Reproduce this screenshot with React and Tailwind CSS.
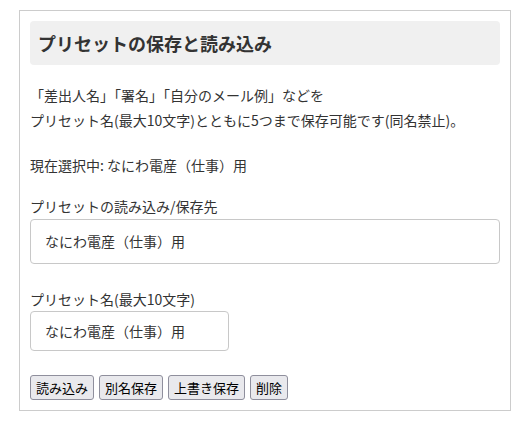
export default function App() {
  const font = { fontFamily: '"Noto Sans CJK JP", "Liberation Sans", sans-serif' };
  const buttons = ["読み込み", "別名保存", "上書き保存", "削除"];

  return (
    <div className="w-[530px] h-[434px] bg-white pt-[10px] pl-[19px]" style={font}>
      <div className="w-[492px] border border-[#cccccc] px-[10px] pt-[10px] pb-[10px] text-[#333333]">
        <h2 className="h-[44px] rounded-[4px] bg-[#f0f0f0] pl-[8px] flex items-center text-[18px] font-bold text-[#333333]">
          プリセットの保存と読み込み
        </h2>

        <p className="mt-[18px] text-[14px] leading-[25px]">
          「差出人名」「署名」「自分のメール例」などを
          <br />
          プリセット名(最大10文字)とともに5つまで保存可能です(同名禁止)。
        </p>

        <p className="mt-[20px] text-[14px] leading-[25px]">現在選択中: なにわ電産（仕事）用</p>

        <label className="block mt-[18px] text-[14px] leading-[20px]">プリセットの読み込み/保存先</label>
        <div className="mt-[3px] h-[45px] rounded-[4px] border border-[#c8c8c8] flex items-center pl-[14px] text-[14px]">
          なにわ電産（仕事）用
        </div>

        <label className="block mt-[25px] text-[14px] leading-[20px]">プリセット名(最大10文字)</label>
        <div className="mt-[2px] w-[199px] h-[40px] rounded-[4px] border border-[#c8c8c8] flex items-center pl-[14px] text-[14px]">
          なにわ電産（仕事）用
        </div>

        <div className="mt-[24px] flex gap-[5px]">
          {buttons.map((b) => (
            <button
              key={b}
              className="h-[25px] px-[5px] rounded-[3px] border border-[#8f8f9d] bg-[#e9e9ed] text-[13px] text-black leading-none"
            >
              {b}
            </button>
          ))}
        </div>
      </div>
    </div>
  );
}
